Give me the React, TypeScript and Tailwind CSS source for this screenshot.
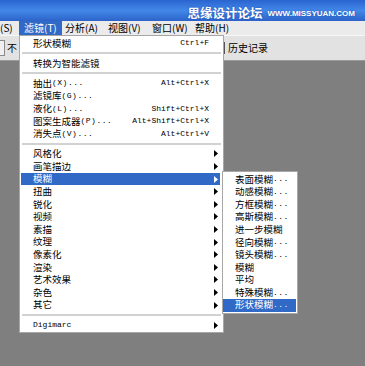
type Row = {
  label: string;
  suffix?: string;
  shortcut?: string;
  sub?: boolean;
  active?: boolean;
  mono?: boolean;
};

const filterMenu: (Row | "sep")[] = [
  { label: "形状模糊", shortcut: "Ctrl+F" },
  "sep",
  { label: "转换为智能滤镜" },
  "sep",
  { label: "抽出", suffix: "(X)...", shortcut: "Alt+Ctrl+X" },
  { label: "滤镜库", suffix: "(G)..." },
  { label: "液化", suffix: "(L)...", shortcut: "Shift+Ctrl+X" },
  { label: "图案生成器", suffix: "(P)...", shortcut: "Alt+Shift+Ctrl+X" },
  { label: "消失点", suffix: "(V)...", shortcut: "Alt+Ctrl+V" },
  "sep",
  { label: "风格化", sub: true },
  { label: "画笔描边", sub: true },
  { label: "模糊", sub: true, active: true },
  { label: "扭曲", sub: true },
  { label: "锐化", sub: true },
  { label: "视频", sub: true },
  { label: "素描", sub: true },
  { label: "纹理", sub: true },
  { label: "像素化", sub: true },
  { label: "渲染", sub: true },
  { label: "艺术效果", sub: true },
  { label: "杂色", sub: true },
  { label: "其它", sub: true },
  "sep",
  { label: "Digimarc", sub: true, mono: true },
];

const blurMenu: Row[] = [
  { label: "表面模糊", suffix: "..." },
  { label: "动感模糊", suffix: "..." },
  { label: "方框模糊", suffix: "..." },
  { label: "高斯模糊", suffix: "..." },
  { label: "进一步模糊" },
  { label: "径向模糊", suffix: "..." },
  { label: "镜头模糊", suffix: "..." },
  { label: "模糊" },
  { label: "平均" },
  { label: "特殊模糊", suffix: "..." },
  { label: "形状模糊", suffix: "...", active: true },
];

const menuBar = [
  { label: "(S)", w: "w-[19px] pl-0" },
  { label: "滤镜(T)", w: "w-[43px] pl-[5px]", active: true },
  { label: "分析(A)", w: "w-[43px] pl-[3px]" },
  { label: "视图(V)", w: "w-[44px] pl-[3px]" },
  { label: "窗口(W)", w: "w-[43px] pl-[3px]" },
  { label: "帮助(H)", w: "w-[44px] pl-[3px]" },
];

function Arrow({ white }: { white?: boolean }) {
  return (
    <svg width="4" height="7" viewBox="0 0 4 7" className="shrink-0">
      <polygon points="0,0 4,3.5 0,7" fill={white ? "#ffffff" : "#000000"} />
    </svg>
  );
}

function Label({ row }: { row: Row }) {
  if (row.mono) {
    return <span className="font-['Liberation_Mono',monospace] text-[8px]">{row.label}</span>;
  }
  return (
    <span className="flex items-center">
      <span className="text-[9.5px]">{row.label}</span>
      {row.suffix && (
        <span className="font-['Liberation_Mono',monospace] text-[8px] tracking-[0.5px]">{row.suffix}</span>
      )}
    </span>
  );
}

export default function App() {
  return (
    <div className="relative w-[365px] h-[366px] overflow-hidden bg-[#7f7f7f] font-['Noto_Sans_CJK_SC',sans-serif] leading-none text-black">
      {/* title bar */}
      <div className="h-[21px] bg-linear-to-b from-[#2a64cf] via-[#4388e9] to-[#2d63c9] flex items-end justify-end pr-[10px] pb-[2px]">
        <span className="text-[12.5px] font-bold text-white [text-shadow:0_0_2px_#1c48a8]">思缘设计论坛</span>
        <span className="ml-[5px] mb-[1px] font-['Liberation_Sans',sans-serif] text-[8px] font-bold text-white [text-shadow:0_0_2px_#1c48a8]">
          WWW.MISSYUAN.COM
        </span>
      </div>

      {/* menu bar */}
      <div className="h-[14px] bg-[#ebebeb] flex items-stretch">
        {menuBar.map((m) => (
          <div
            key={m.label}
            className={`${m.w} flex items-center text-[10px] ${m.active ? "bg-[#3169c6] text-white" : ""}`}
          >
            {m.label}
          </div>
        ))}
      </div>

      {/* tool options row */}
      <div className="h-[26px] bg-[#e2e2e2] border-t border-[#f6f6f6] border-b border-b-[#9a9a9a] flex items-center">
        <div className="w-[5px] h-[16px] border border-l-0 border-[#8a8a8a] bg-[#f0f0f0]" />
        <span className="ml-[2px] text-[10px]">不</span>
        <div className="ml-auto w-[141px] h-full flex items-center">
          <div className="w-px h-[12px] bg-[#555]" />
          <span className="ml-[3px] text-[10px]">历史记录</span>
        </div>
      </div>

      {/* filter menu */}
      <div className="absolute left-[19px] top-[35px] w-[205px] bg-white border border-[#a7a7a7] pt-[1px] pb-[1px]">
        {filterMenu.map((r, i) =>
          r === "sep" ? (
            <div key={i} className="h-[7.5px] flex items-center px-[2px]">
              <div className="h-[2px] w-full bg-[#d2d2d2]" />
            </div>
          ) : (
            <div
              key={i}
              className={`h-[12.6px] ml-[1px] mr-[3px] pl-[12px] pr-[2px] flex items-center justify-between ${
                r.active ? "bg-[#3169c6] text-white" : ""
              }`}
            >
              <Label row={r} />
              {r.shortcut && (
                <span className="mr-[9px] font-['Liberation_Mono',monospace] text-[8px]">{r.shortcut}</span>
              )}
              {r.sub && <Arrow white={r.active} />}
            </div>
          )
        )}
      </div>

      {/* blur submenu */}
      <div className="absolute left-[222px] top-[171px] w-[76px] bg-white border border-[#a7a7a7] p-[1px] pl-0">
        {blurMenu.map((r) => (
          <div
            key={r.label}
            className={`h-[12.6px] pl-[12px] flex items-center ${r.active ? "bg-[#3169c6] text-white" : ""}`}
          >
            <Label row={r} />
          </div>
        ))}
      </div>
    </div>
  );
}
